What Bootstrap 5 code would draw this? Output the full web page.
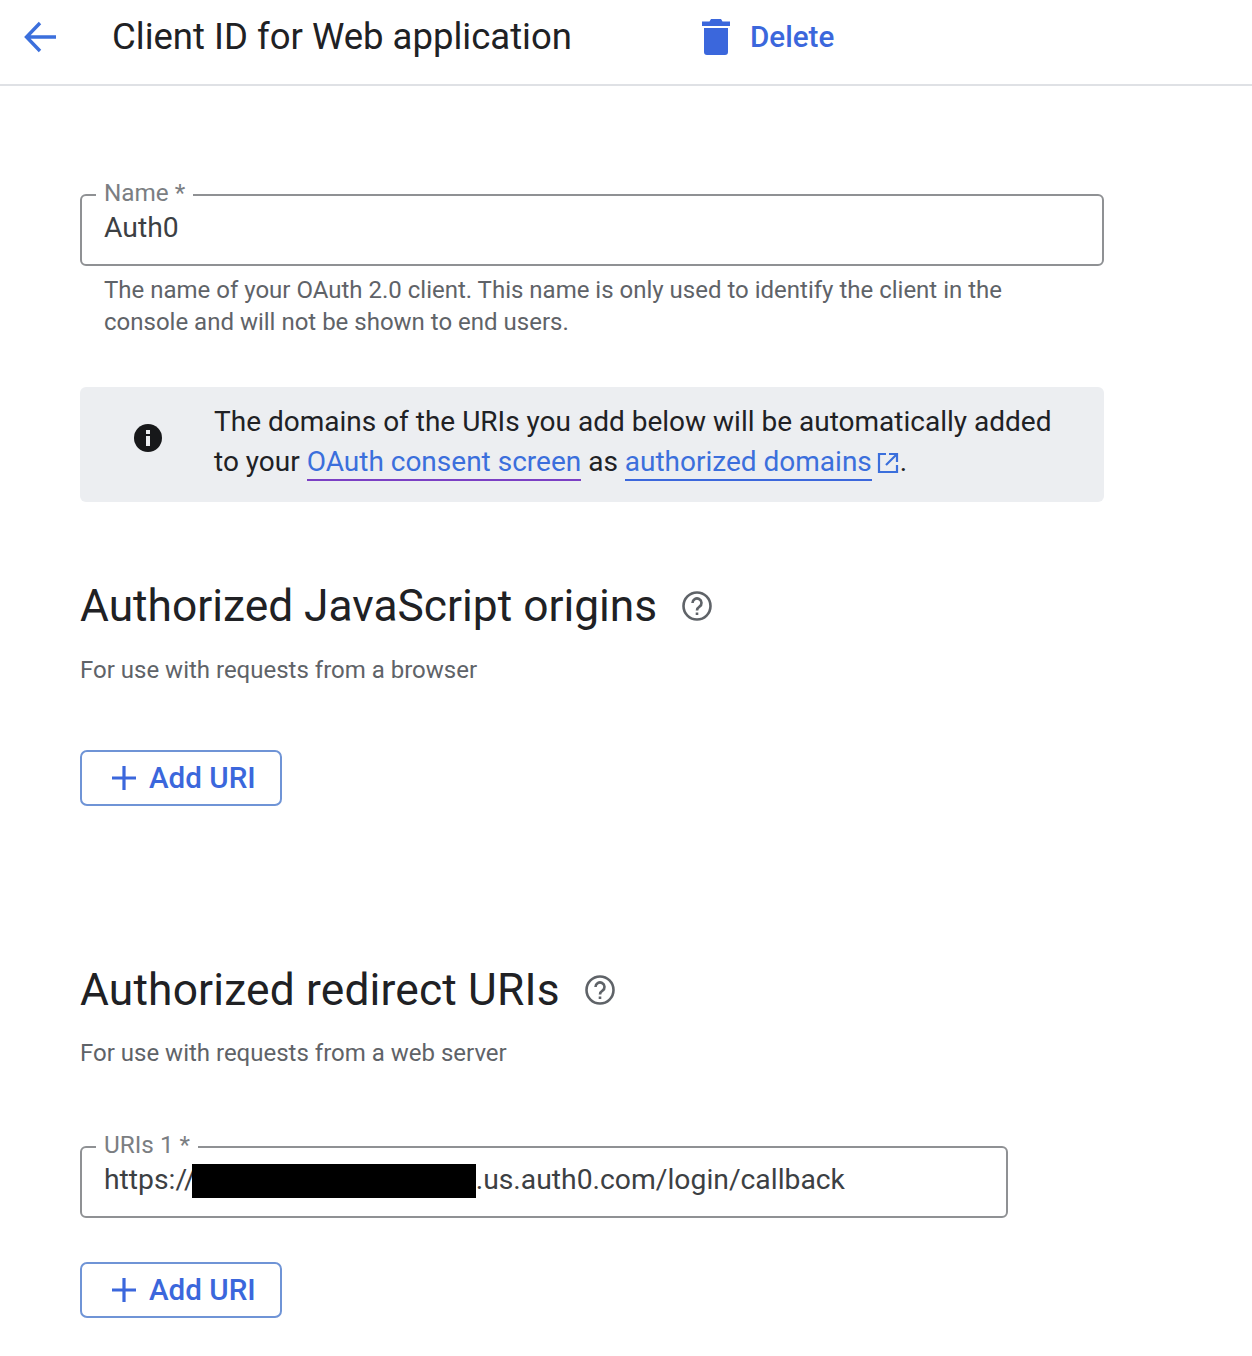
<!DOCTYPE html>
<html lang="en">
<head>
  <meta charset="UTF-8" />
  <meta name="viewport" content="width=device-width, initial-scale=1.0" />
  <title>Client ID for Web application</title>
  <link href="https://cdn.jsdelivr.net/npm/bootstrap@5.3.3/dist/css/bootstrap.min.css" rel="stylesheet" />
  <style>
    body {
      font-family: Roboto, "Liberation Sans", sans-serif;
      color: #202124;
      background-color: #fff;
    }

    .top-bar {
      height: 86px;
      padding-left: 23px;
      padding-bottom: 10px;
      border-bottom: 2px solid #dfe1e5;
    }

    .top-title {
      font-size: 36.5px;
      font-weight: 400;
      line-height: 44px;
      margin: 0 0 0 53px;
      width: 590px;
      white-space: nowrap;
    }

    .trash-icon {
      margin-right: 20px;
    }

    .delete-link {
      color: #3b67dc;
      font-size: 29.600px;
      font-weight: 500;
      text-decoration: none;
    }

    .page-body {
      width: 1104px;
      padding-left: 80px;
    }

    .outline-field {
      height: 83px;
      border: 2px solid #8f9194;
      border-radius: 6px;
      padding: 0 14px;
      margin: 0;
    }

    .outline-field legend {
      float: none;
      width: auto;
      height: 24px;
      font-size: 24.300px;
      line-height: 20px;
      color: #7b7e82;
      margin: 0;
      padding: 0 8px;
    }

    .field-value {
      font-size: 28.300px;
      line-height: 36px;
      color: #3c4043;
      padding: 3px 0 0 8px;
      white-space: nowrap;
    }

    .redact-block {
      display: inline-block;
      width: 284px;
      height: 34px;
      margin-left: -4px;
      margin-bottom: 2px;
      background-color: #000;
      vertical-align: middle;
    }

    .hint-text {
      font-size: 24px;
      line-height: 32px;
      color: #5f6368;
      padding: 0 60px 0 24px;
      margin: 8px 0 0;
    }

    .info-box {
      height: 115px;
      margin-top: 49px;
      background-color: #eceef1;
      border-radius: 6px;
    }

    .info-icon {
      width: 136px;
      padding-bottom: 13px;
    }

    .info-text {
      font-size: 28px;
      line-height: 40px;
      color: #202124;
      margin: 0 0 0 -2px;
      padding: 0 0 6px 0;
    }

    .info-text a {
      color: #3b6fdc;
      text-decoration: none;
      padding-bottom: 1px;
      border-bottom: 2px solid #3b67dc;
    }

    .info-text a.visited-link {
      border-bottom-color: #7b3fc4;
    }

    .section-title {
      font-size: 44.300px;
      font-weight: 400;
      line-height: 56px;
      margin: 0;
      color: #202124;
    }

    .section-sub {
      font-size: 24px;
      line-height: 32px;
      color: #5f6368;
      margin: 0;
    }

    .add-btn {
      display: inline-flex;
      align-items: center;
      gap: 12px;
      width: 202px;
      height: 56px;
      padding: 0 0 0 29px;
      color: #3b67dc;
      font-size: 29.600px;
      font-weight: 500;
      border: 2px solid #6f94d6;
      border-radius: 7px;
      background: #fff;
    }

    .name-field { margin-top: 97px; }
    .sec-js { margin-top: 76px; }
    .sec-js .section-sub { margin-top: 20px; }
    .sec-js .help-mark { margin-left: 24px; }
    .sec-js .add-btn { margin-top: 64px; }
    .sec-redirect { margin-top: 156px; }
    .sec-redirect .section-title { letter-spacing: .17px; }
    .sec-redirect .section-sub { margin-top: 19px; }
    .sec-redirect .help-mark { margin-left: 24px; }
    .sec-redirect .outline-field { width: 928px; margin-top: 66px; }
    .sec-redirect .add-btn { margin-top: 44px; }
  </style>
</head>
<body>
  <!-- Top bar -->
  <header class="top-bar d-flex align-items-center">
    <svg width="36" height="36" viewBox="0 0 36 36" fill="none" stroke="#3b6fdc" stroke-width="3.400">
      <path d="M33 18H4M17 4 3.500 18 17 32" />
    </svg>
    <h1 class="top-title">Client ID for Web application</h1>
    <svg class="trash-icon" width="28" height="36" viewBox="0 0 28 36" fill="#3b67dc">
      <path d="M9 0h10l1.500 2.500H28V7H0V2.500h7.500zM2 9h24v24a3 3 0 0 1-3 3H5a3 3 0 0 1-3-3z" />
    </svg>
    <a href="#" class="delete-link">Delete</a>
  </header>

  <main class="page-body">
    <fieldset class="outline-field name-field">
      <legend>Name *</legend>
      <div class="field-value">Auth0</div>
    </fieldset>
    <p class="hint-text">The name of your OAuth 2.0 client. This name is only used to identify the client in the console and will not be shown to end users.</p>

    <div class="info-box d-flex align-items-center">
      <div class="info-icon d-flex justify-content-center">
        <svg width="30" height="30" viewBox="0 0 30 30">
          <circle cx="15" cy="15" r="14" fill="#17181a" />
          <rect x="13" y="13" width="4" height="10" fill="#eceef1" />
          <rect x="13" y="7" width="4" height="4" fill="#eceef1" />
        </svg>
      </div>
      <p class="info-text">The domains of the URIs you add below will be automatically added<br />to your <a href="#" class="visited-link">OAuth consent screen</a> as <a href="#">authorized domains</a><svg class="ms-1" width="24" height="24" viewBox="0 0 24 24" fill="none" stroke="#3b6fdc" stroke-width="2.200"><path d="M10 3H3v18h18v-7M13 3h8v8M21 3 10 14" /></svg>.</p>
    </div>

    <section class="sec-js">
      <div class="d-flex align-items-center">
        <h2 class="section-title">Authorized JavaScript origins</h2>
        <svg class="help-mark" width="32" height="32" viewBox="0 0 32 32" fill="none" stroke="#5f6368" stroke-width="2.600">
          <circle cx="16" cy="16" r="13.500" />
          <path d="M11.500 13a4.500 4.500 0 1 1 7 3.700c-1.500 1-2.500 1.800-2.500 3.800" />
          <path d="M16 22.500v2.500" />
        </svg>
      </div>
      <p class="section-sub">For use with requests from a browser</p>
      <button type="button" class="btn add-btn">
        <svg width="26" height="26" viewBox="0 0 26 26" fill="none" stroke="#3b67dc" stroke-width="3.200"><path d="M13 1v24M1 13h24" /></svg>
        Add URI
      </button>
    </section>

    <section class="sec-redirect">
      <div class="d-flex align-items-center">
        <h2 class="section-title">Authorized redirect URIs</h2>
        <svg class="help-mark" width="32" height="32" viewBox="0 0 32 32" fill="none" stroke="#5f6368" stroke-width="2.600">
          <circle cx="16" cy="16" r="13.500" />
          <path d="M11.500 13a4.500 4.500 0 1 1 7 3.700c-1.500 1-2.500 1.800-2.500 3.800" />
          <path d="M16 22.500v2.500" />
        </svg>
      </div>
      <p class="section-sub">For use with requests from a web server</p>
      <fieldset class="outline-field">
        <legend>URIs 1 *</legend>
        <div class="field-value">https://<span class="redact-block"></span>.us.auth0.com/login/callback</div>
      </fieldset>
      <button type="button" class="btn add-btn">
        <svg width="26" height="26" viewBox="0 0 26 26" fill="none" stroke="#3b67dc" stroke-width="3.200"><path d="M13 1v24M1 13h24" /></svg>
        Add URI
      </button>
    </section>
  </main>

  <script src="https://cdn.jsdelivr.net/npm/bootstrap@5.3.3/dist/js/bootstrap.bundle.min.js"></script>
</body>
</html>
